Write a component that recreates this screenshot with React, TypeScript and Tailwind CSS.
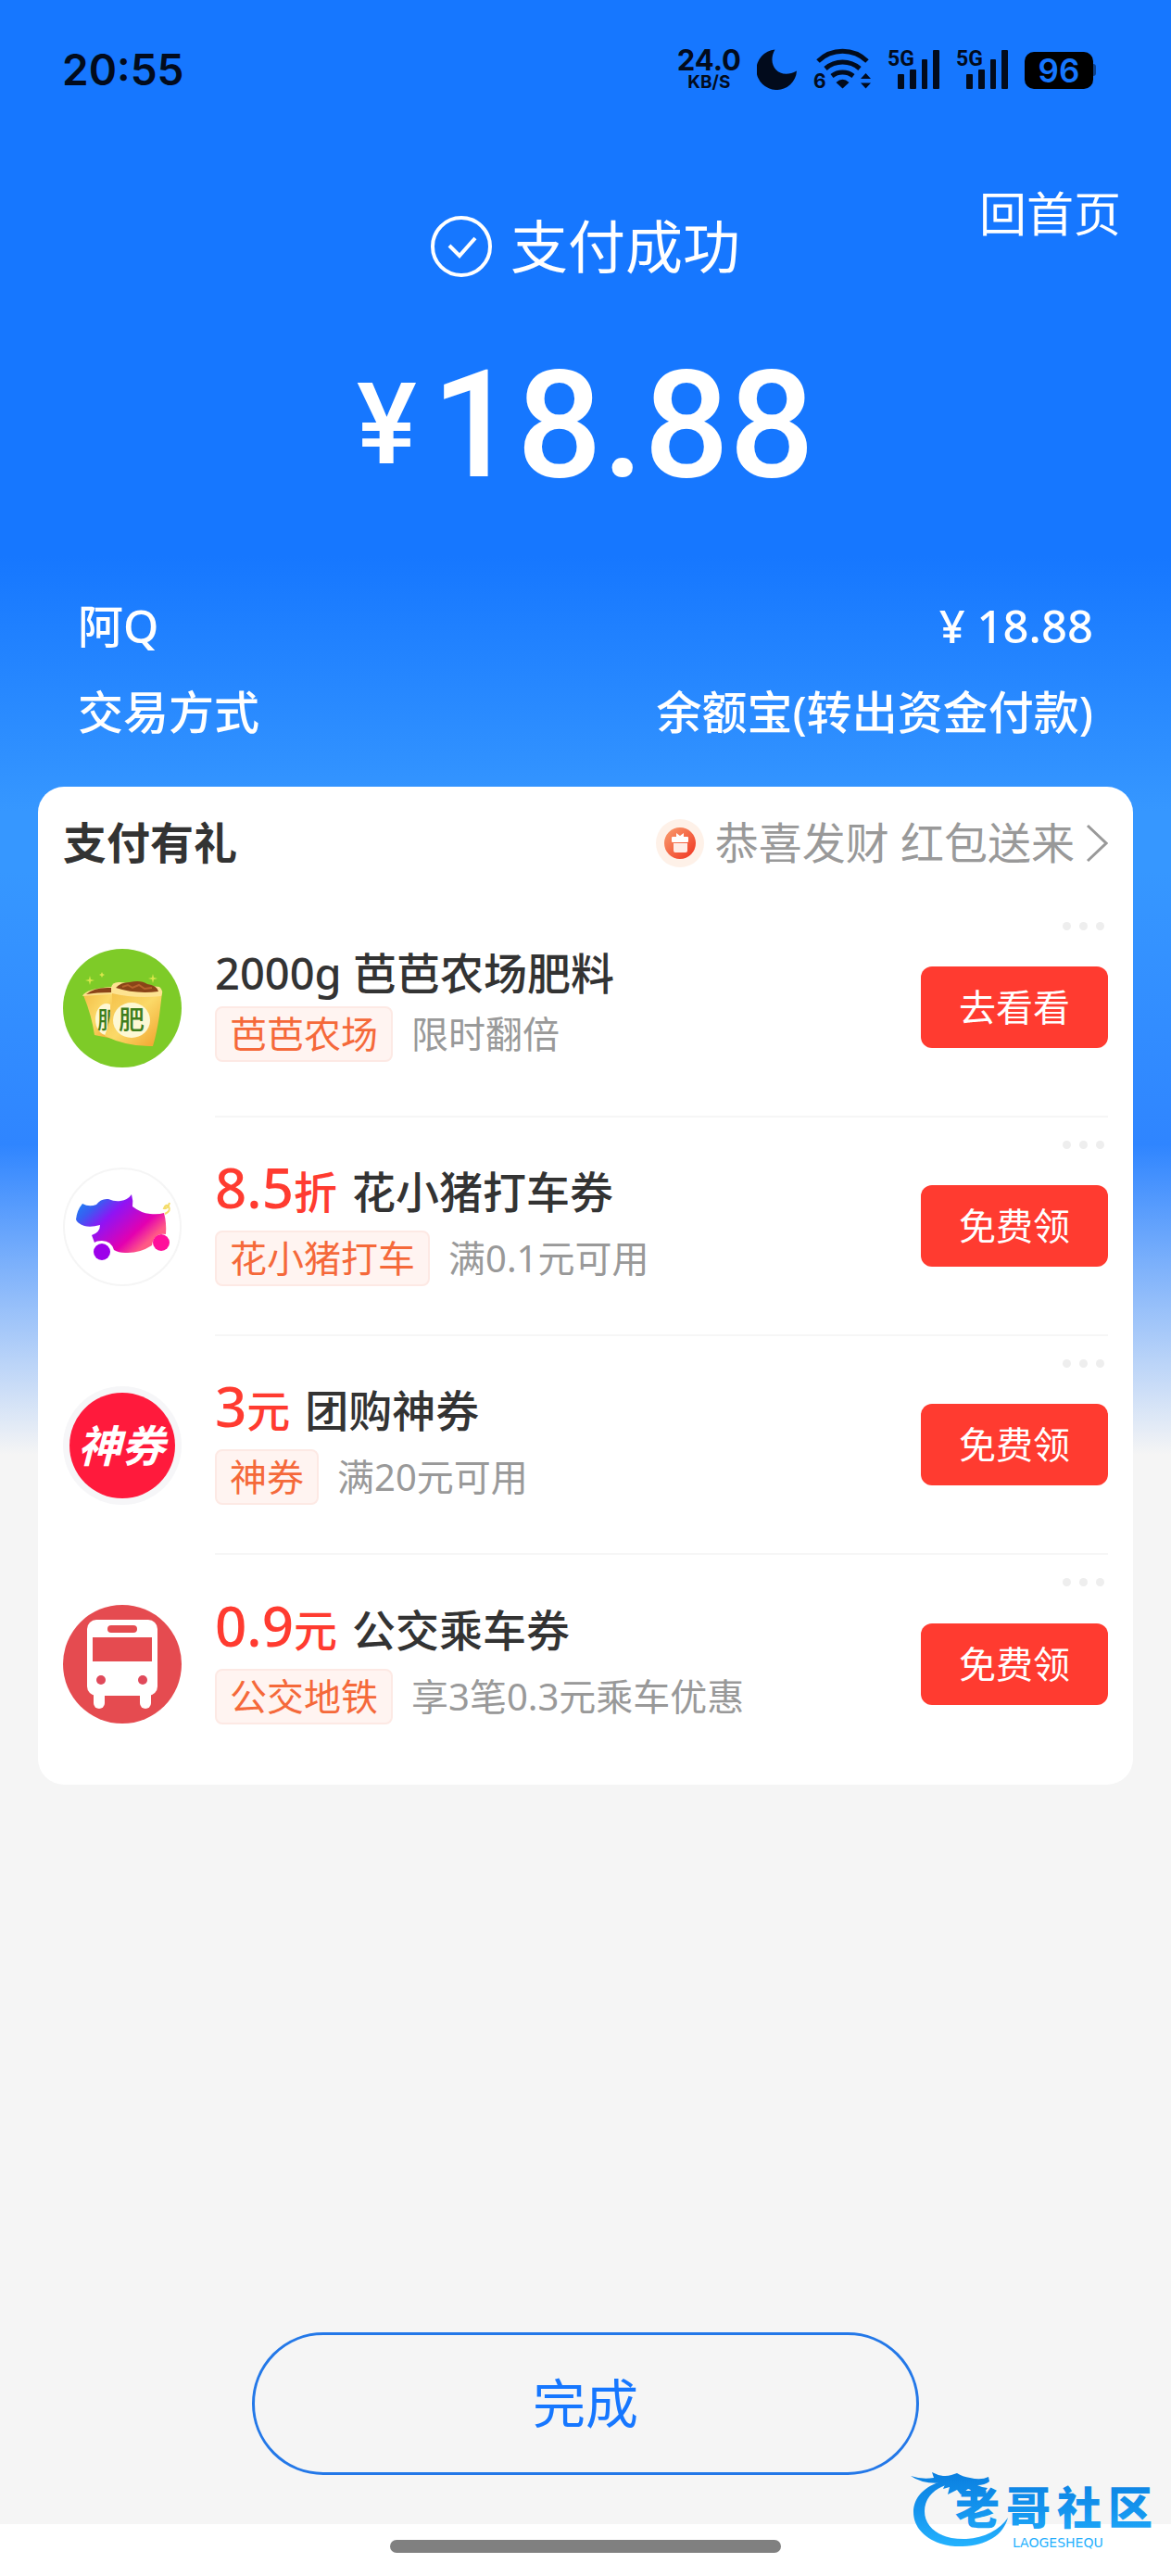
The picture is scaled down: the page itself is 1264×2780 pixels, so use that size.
import React from "react";

const offers = [
  {
    icon: <FarmIcon />,
    price: "",
    unit: "",
    title: "2000g 芭芭农场肥料",
    tag: "芭芭农场",
    note: "限时翻倍",
    action: "去看看",
  },
  {
    icon: <PigIcon />,
    price: "8.5",
    unit: "折",
    title: "花小猪打车券",
    tag: "花小猪打车",
    note: "满0.1元可用",
    action: "免费领",
  },
  {
    icon: <CouponIcon />,
    price: "3",
    unit: "元",
    title: "团购神券",
    tag: "神券",
    note: "满20元可用",
    action: "免费领",
  },
  {
    icon: <BusIcon />,
    price: "0.9",
    unit: "元",
    title: "公交乘车券",
    tag: "公交地铁",
    note: "享3笔0.3元乘车优惠",
    action: "免费领",
  },
];

function FarmIcon() {
  return (
    <svg viewBox="0 0 128 128" className="size-32 shrink-0">
      <defs>
        <linearGradient id="bag" x1="0" y1="0" x2="1" y2="1">
          <stop offset="0" stopColor="#f3bd45" />
          <stop offset="0.5" stopColor="#fbd968" />
          <stop offset="1" stopColor="#f0a02a" />
        </linearGradient>
        <clipPath id="backBag">
          <path d="M22 50L51 46V95L34 93Q30 72 22 50Z" />
        </clipPath>
      </defs>
      <circle cx="64" cy="64" r="64" fill="#7ecb28" />
      <path d="M22 50L54 46V97L34 93Q31 72 22 50Z" fill="url(#bag)" />
      <path d="M21 51Q24 43 53 41V49Q34 50 21 51Z" fill="#fbe08a" />
      <path d="M25 49Q34 41 52 42V47Q36 47 25 49Z" fill="#8a4418" />
      <g clipPath="url(#backBag)">
        <ellipse cx="47" cy="76" rx="12" ry="17" fill="#fdf8d4" />
        <text
          x="37"
          y="86"
          fontSize="25"
          fontWeight="500"
          fill="#3f7d1c"
          fontFamily="'Noto Sans CJK SC', sans-serif"
        >
          肥
        </text>
      </g>
      <path
        d="M53 44Q78 52 107 47L104 72Q101 92 97 105Q70 106 45 94Q54 70 53 44Z"
        fill="url(#bag)"
      />
      <path d="M52 42Q53 35 62 36L104 41Q109 45 106 51Q78 54 53 48Z" fill="#fde391" />
      <path d="M57 42Q62 36 72 36Q84 33 91 38Q101 39 103 46Q78 49 57 42Z" fill="#8a4418" />
      <path d="M64 41l6-2 5 3 7-3 6 4 8-1" stroke="#b5622b" strokeWidth="2" fill="none" />
      <ellipse cx="74" cy="77" rx="20" ry="19" fill="#fdf8d4" />
      <text
        x="60"
        y="87"
        fontSize="28"
        fontWeight="500"
        fill="#3f7d1c"
        fontFamily="'Noto Sans CJK SC', sans-serif"
      >
        肥
      </text>
      <path
        d="M29 29l1 4 4 1-4 1-1 4-1-4-4-1 4-1zM97 27l1 4 4 1-4 1-1 4-1-4-4-1 4-1zM42 25l1 2 2 1-2 1-1 2-1-2-2-1 2-1z"
        fill="#d9e64a"
      />
    </svg>
  );
}

function PigIcon() {
  return (
    <svg viewBox="0 0 128 128" className="size-32 shrink-0">
      <defs>
        <linearGradient id="pig" x1="0.1" y1="0" x2="0.95" y2="0.6">
          <stop offset="0" stopColor="#1a86f5" />
          <stop offset="0.2" stopColor="#3a5cf2" />
          <stop offset="0.42" stopColor="#8f14f4" />
          <stop offset="0.8" stopColor="#e300b0" />
          <stop offset="1" stopColor="#ff5a86" />
        </linearGradient>
      </defs>
      <circle cx="64" cy="64" r="63" fill="#fff" stroke="#f5f5f5" strokeWidth="2" />
      <path
        d="M21 39Q28 43 36 40Q41 33 49 34Q56 37 62 36Q70 35 74 29Q76 36 75 42Q84 49 94 50Q103 51 109 49Q112 60 111 72Q98 70 96 84Q82 93 67 92Q60 92 55 89Q52 79 42 79Q36 79 34 81L31 73Q40 70 40 62Q30 65 23 63Q15 60 14 56Q15 46 21 39Z"
        fill="url(#pig)"
      />
      <path
        d="M110 50Q117 47 114 42Q111 39 109 44Q113 45 115 38"
        fill="none"
        stroke="#f4dc6a"
        strokeWidth="2"
      />
      <circle cx="42" cy="91" r="9" fill="#9d00ea" />
      <circle cx="106" cy="81" r="9" fill="#ff0f9b" />
    </svg>
  );
}

function CouponIcon() {
  return (
    <svg viewBox="0 0 128 128" className="size-32 shrink-0">
      <circle cx="64" cy="64" r="64" fill="#f6f6f8" />
      <circle cx="64" cy="64" r="57" fill="#ff1a3c" />
      <text
        x="63"
        y="82"
        textAnchor="middle"
        fontSize="47"
        fontWeight="700"
        fontStyle="italic"
        fill="#fff"
        fontFamily="'Noto Sans CJK SC', sans-serif"
      >
        神券
      </text>
    </svg>
  );
}

function BusIcon() {
  return (
    <svg viewBox="0 0 128 128" className="size-32 shrink-0">
      <circle cx="64" cy="64" r="64" fill="#e54b50" />
      <rect x="26" y="16" width="76" height="82" rx="10" fill="#fff" />
      <rect x="33" y="88" width="12" height="24" rx="6" fill="#fff" />
      <rect x="83" y="88" width="12" height="24" rx="6" fill="#fff" />
      <rect x="48" y="22" width="32" height="8" rx="4" fill="#e54b50" />
      <rect x="32" y="35" width="64" height="26" fill="#e54b50" />
      <circle cx="41" cy="81" r="5" fill="#e0495a" />
      <circle cx="86" cy="81" r="5" fill="#e0495a" />
    </svg>
  );
}

const GiftIcon = () => (
  <svg viewBox="0 0 52 52" className="size-[52px]">
    <defs>
      <linearGradient id="gift" x1="0" y1="0" x2="1" y2="1">
        <stop offset="0" stopColor="#f9a070" />
        <stop offset="1" stopColor="#f0321f" />
      </linearGradient>
    </defs>
    <circle cx="26" cy="26" r="26" fill="#fef1e8" />
    <circle cx="26" cy="26" r="17" fill="url(#gift)" />
    <rect x="17" y="19" width="18" height="6" rx="1" fill="#fff" />
    <path d="M22 15l4 3 4-3v4h-8z" fill="#fff" />
    <path d="M19 26h15v8q0 2-2 2H21q-2 0-2-2z" fill="#ffece6" />
  </svg>
);

const Signal = () => (
  <svg viewBox="0 0 57 44" className="h-11 w-[57px] overflow-visible">
    <text x="0" y="18" fontSize="23" fontWeight="700" fontFamily="Roboto, sans-serif">
      5G
    </text>
    <rect x="11" y="27" width="7" height="16" rx="1" />
    <rect x="24" y="22" width="7" height="21" rx="1" />
    <rect x="37" y="11" width="6" height="32" rx="1" />
    <rect x="49" y="1" width="7" height="42" rx="1" />
  </svg>
);

const StatusBar = () => (
  <div className="flex h-[150px] items-center justify-between pr-20 pl-[67px] text-[#020b1c]">
    <span className="font-[Inter,sans-serif] text-[46px] font-semibold">20:55</span>
    <div className="flex items-center gap-[17px] fill-[#020b1c]">
      <div className="flex flex-col items-center font-[Inter,sans-serif] font-bold">
        <span className="text-[31px] leading-[28px]">24.0</span>
        <span className="text-[19px] leading-[20px]">KB/S</span>
      </div>
      <svg viewBox="0 0 44 44" className="size-11">
        <path d="M19.5 0.5C10 17 24 34 43 23.5A21.8 21.8 0 1 1 19.5 0.5Z" />
      </svg>
      <svg viewBox="0 0 63 44" className="h-11 w-[63px] overflow-visible">
        <text x="0" y="42" fontSize="21" fontWeight="700" fontFamily="Inter, sans-serif">
          6
        </text>
        <g fill="none" stroke="#020b1c" strokeWidth="5">
          <path d="M5 13A38 38 0 0 1 58 13" />
          <path d="M13 21A28 28 0 0 1 50 21" />
          <path d="M20 29A19 19 0 0 1 43 29" />
        </g>
        <path d="M24.5 36Q31.500 29.500 38.500 36L31.500 42.500Z" />
        <path d="M51 32l5.500-6 5.500 6zM51 36.500h11l-5.500 6z" />
      </svg>
      <Signal />
      <Signal />
      <svg viewBox="0 0 78 44" className="h-11 w-[78px]">
        <rect x="70" y="16" width="7" height="13" rx="3" opacity="0.5" />
        <rect x="0" y="3" width="74" height="40" rx="10" fill="#000" />
        <text
          x="37"
          y="36"
          textAnchor="middle"
          fontSize="35"
          fontWeight="600"
          fill="#1677ff"
          fontFamily="Inter, sans-serif"
        >
          96
        </text>
      </svg>
    </div>
  </div>
);

const SummaryRow = ({ label, value }: any) => (
  <div className="flex justify-between text-[49px] leading-[93px] font-medium">
    <dt>{label}</dt>
    <dd>{value}</dd>
  </div>
);

const OfferRow = ({ offer, last }: any) => (
  <li className="relative flex h-[236px] items-center gap-9">
    {offer.icon}
    <div
      className={`flex h-full flex-1 items-center justify-between ${
        last ? "" : "border-b-2 border-[#f6f6f6]"
      }`}
    >
      <div className={`flex flex-col pb-2 ${offer.price ? "gap-3" : "gap-1.5"}`}>
        <h3 className="text-[47px] leading-[60px] font-medium text-[#333]">
          {offer.price && (
            <span className="mr-4 text-[#ff3b30]">
              <span className="text-[60px] leading-none">{offer.price}</span>
              {offer.unit}
            </span>
          )}
          {offer.title}
        </h3>
        <p className="flex items-center gap-5 text-[40px] leading-[56px] text-[#999]">
          <span className="rounded-lg border-2 border-[#fde9e4] bg-[#fff4f1] px-3.5 text-[#f5693a]">
            {offer.tag}
          </span>
          {offer.note}
        </p>
      </div>
      <button className="h-[88px] w-[202px] rounded-xl bg-[#ff3b30] text-[40px] text-white">
        {offer.action}
      </button>
    </div>
    <button aria-label="更多" className="absolute top-[25px] right-1 flex gap-[9px]">
      <span className="size-[9px] rounded-full bg-[#eee]" />
      <span className="size-[9px] rounded-full bg-[#eee]" />
      <span className="size-[9px] rounded-full bg-[#eee]" />
    </button>
  </li>
);

const Watermark = () => (
  <svg viewBox="0 0 264 92" className="absolute right-[17px] bottom-7 h-[92px] w-[264px]">
    <defs>
      <linearGradient id="mark" gradientUnits="userSpaceOnUse" x1="0" y1="8" x2="0" y2="90">
        <stop offset="0" stopColor="#0a7fe0" />
        <stop offset="0.5" stopColor="#1494ee" />
        <stop offset="1" stopColor="#25b4ff" />
      </linearGradient>
    </defs>
    <g fill="url(#mark)">
      <path d="M42 16C17 20 3 34 3 51C3 73 26 89 56 88C82 87 100 76 105 57C96 70 80 79 60 80C34 81 15 69 15 50C15 35 27 23 46 20Z" />
      <path d="M0 12Q12 16 25 14L23 8Q34 14 44 11L50 9Q56 13 64 14Q76 17 84 13L85 18Q80 22 72 22Q78 25 83 25L80 29Q68 29 62 26L54 32L50 27L40 32L42 24L35 26L38 19Q14 22 0 12Z" />
      <g fontSize="48" fontWeight="900" fontFamily="'Noto Sans CJK SC', sans-serif">
        <text x="48" y="64">老</text>
        <text x="103" y="64">哥</text>
        <text x="158" y="64">社</text>
        <text x="213" y="64">区</text>
      </g>
      <text x="110" y="89" fontSize="14" fontFamily="'DejaVu Sans', sans-serif">
        LAOGESHEQU
      </text>
    </g>
  </svg>
);

const App = () => {
  return (
    <div className="relative flex min-h-screen flex-col bg-[#f5f5f5] bg-[linear-gradient(#1677ff_600px,#3697ff_875px,#3697ff_940px,#2f85ff_1235px,#f5f5f5_1570px)] font-['Noto_Sans','Noto_Sans_CJK_SC',sans-serif]">
      <StatusBar />
      <header className="text-white">
        <div className="grid grid-cols-[1fr_auto_1fr] items-start">
          <div />
          <h1 className="mt-20 flex items-center gap-5 text-[62px] leading-[72px]">
            <svg viewBox="0 0 66 66" fill="none" stroke="#fff" className="size-[66px]">
              <circle cx="33" cy="33" r="31" strokeWidth="4" />
              <path d="M20 32l11 11 17-19" strokeWidth="4" />
            </svg>
            支付成功
          </h1>
          <a
            href="#"
            className="mt-[50px] mr-[54px] justify-self-end text-[51px] leading-[60px]"
          >
            回首页
          </a>
        </div>
        <p className="mt-[77px] mb-[90px] flex items-center justify-center gap-4 font-[Roboto,sans-serif] text-[162px] leading-[160px] font-medium">
          <span className="text-[122px]">¥</span>18.88
        </p>
        <dl className="px-[84px] pb-[34px]">
          <SummaryRow label="阿Q" value="¥ 18.88" />
          <SummaryRow label="交易方式" value="余额宝(转出资金付款)" />
        </dl>
      </header>

      <section className="mx-[41px] rounded-[28px] bg-white px-[27px] pb-3">
        <div className="flex h-[121px] items-center justify-between">
          <h2 className="text-[47px] font-bold text-[#333]">支付有礼</h2>
          <a href="#" className="flex items-center gap-3 text-[47px] text-[#999]">
            <GiftIcon />
            恭喜发财 红包送来
            <svg
              viewBox="0 0 24 42"
              fill="none"
              stroke="#999"
              strokeWidth="3"
              className="h-[42px] w-6"
            >
              <path d="M2 2l20 19L2 40" />
            </svg>
          </a>
        </div>
        <ul>
          {offers.map((offer, index) => (
            <OfferRow
              key={offer.title}
              offer={offer}
              last={index === offers.length - 1}
            />
          ))}
        </ul>
      </section>

      <button className="mx-auto mt-auto mb-[53px] h-[154px] w-[57%] rounded-full border-3 border-[#2378e8] text-[57px] text-[#1677ff]">
        完成
      </button>
      <footer className="flex h-14 justify-center bg-white pt-[17px]">
        <div className="h-3.5 w-1/3 rounded-full bg-[#808080]" />
      </footer>
      <Watermark />
    </div>
  );
};

export default App;
